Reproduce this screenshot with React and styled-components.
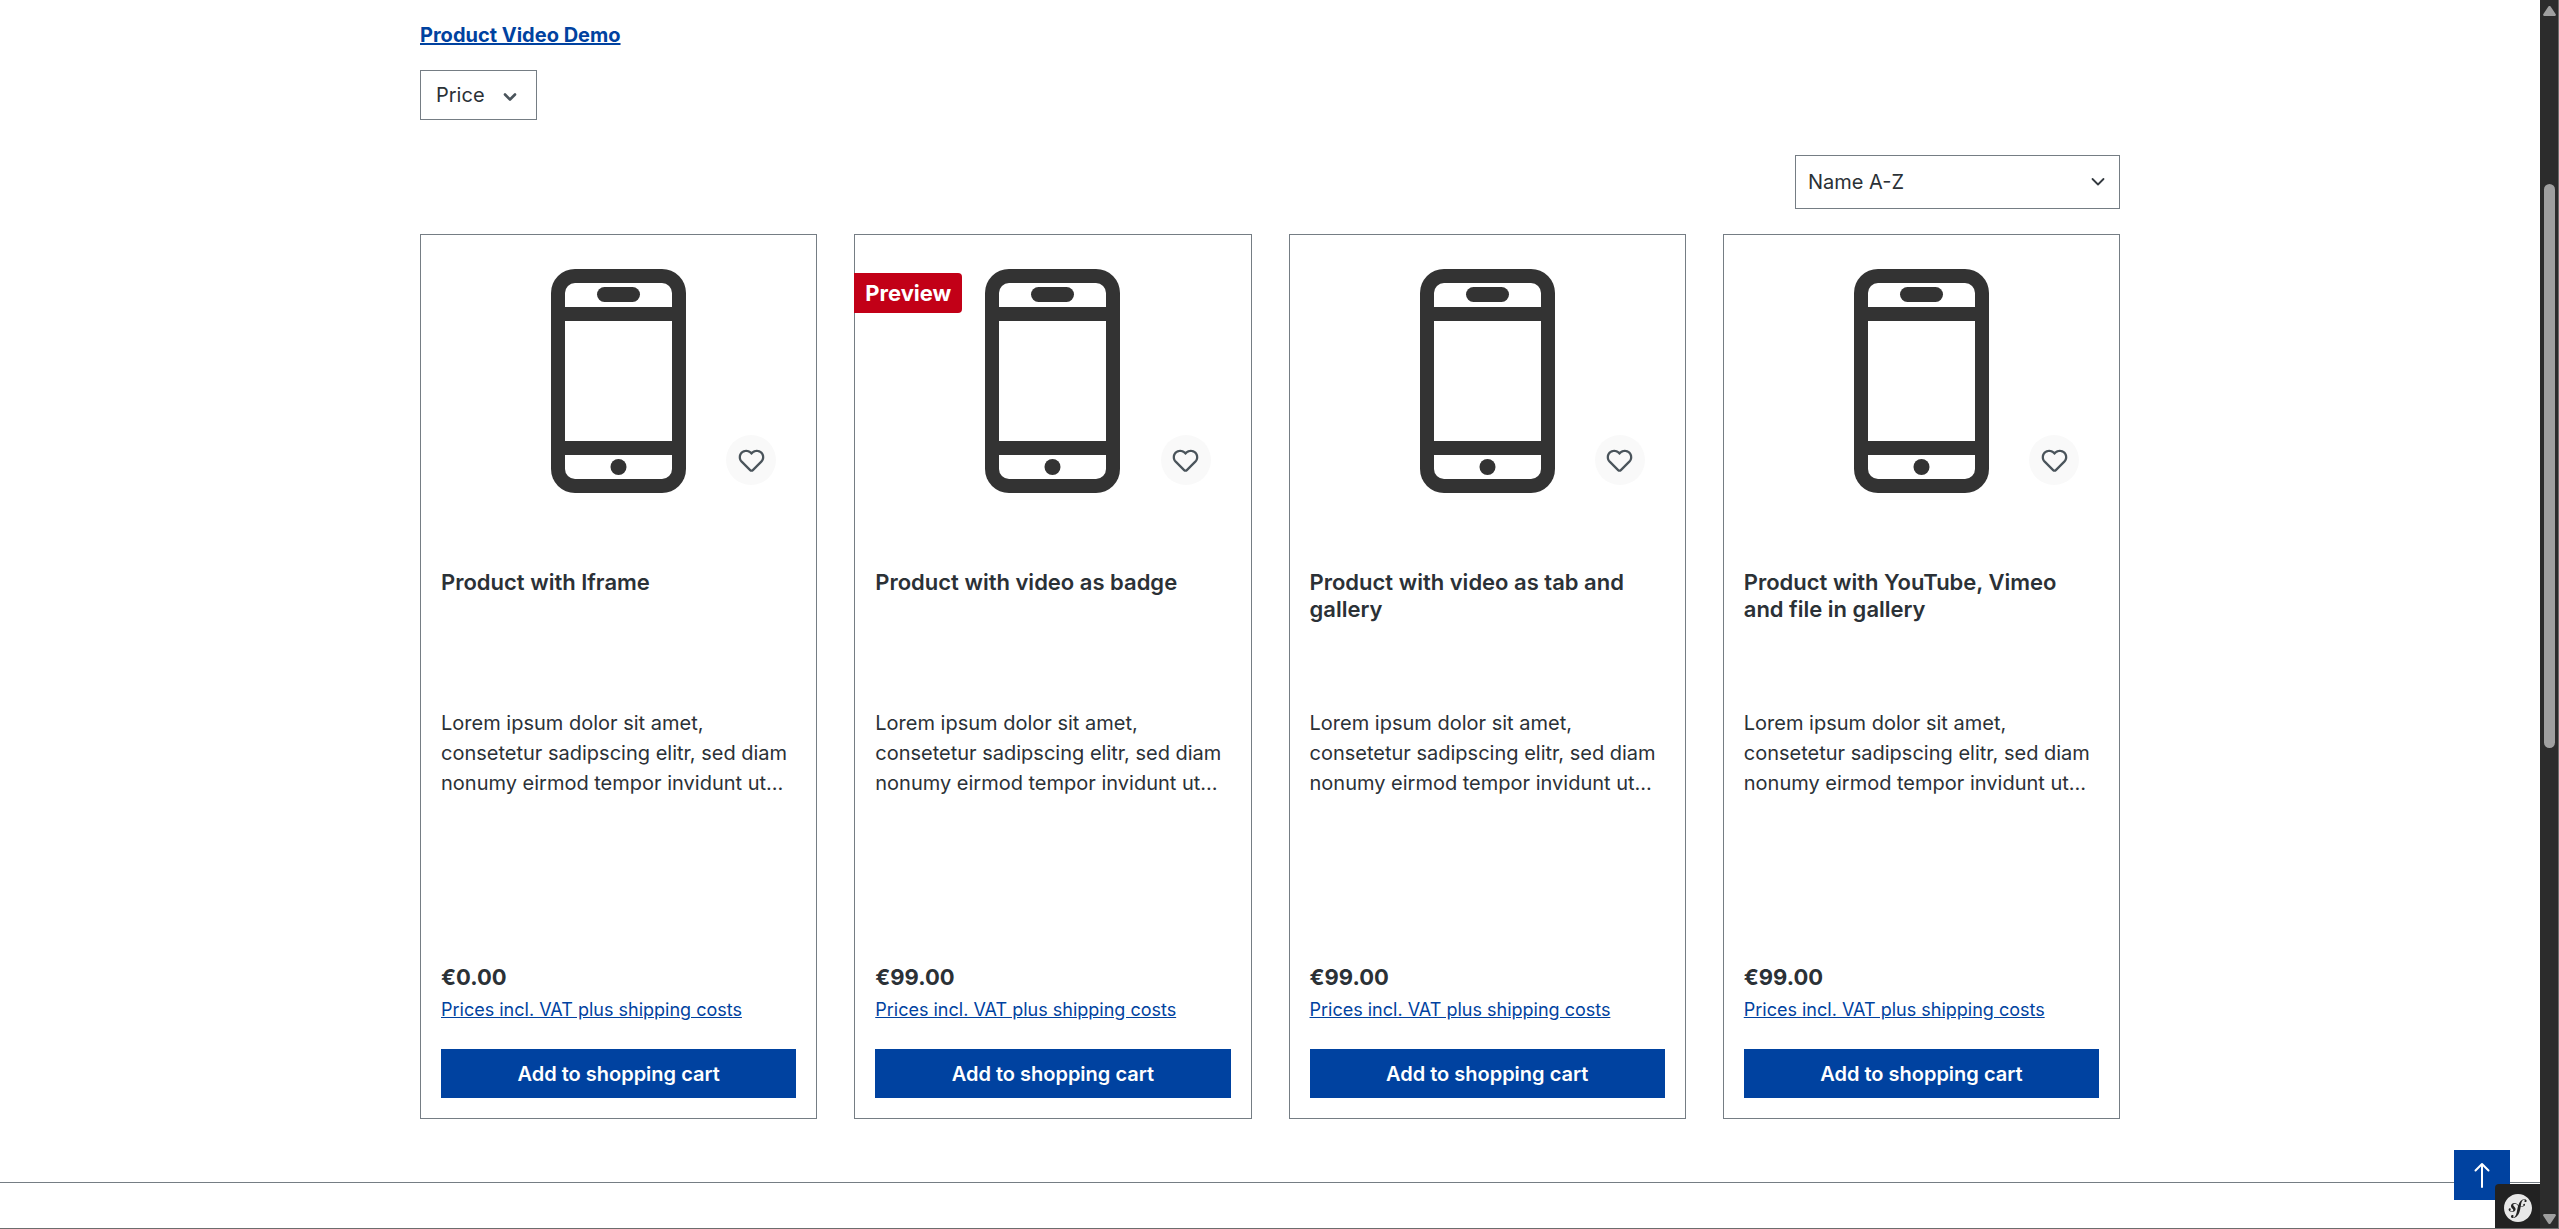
import React from "react";
import styled, { createGlobalStyle } from "styled-components";
import { SiSymfony } from "react-icons/si";

const GlobalStyle = createGlobalStyle`
  *, *::before, *::after { box-sizing: border-box; }
  body {
    margin: 0;
    background: #fff;
    color: #2b3136;
    font-family: Inter, "Liberation Sans", sans-serif;
    font-size: 20px;
    line-height: 30px;
  }
  button, select { font: inherit; color: inherit; }
`;

const Shell = styled.div`
  display: grid;
  grid-template-columns: minmax(0, 1fr) 19px;
  height: 100vh;
  overflow: hidden;
  border-bottom: 1px solid #6d6d6d;
`;

const Page = styled.div`
  display: flex;
  flex-direction: column;
`;

const Container = styled.main`
  width: 100%;
  max-width: 1740px;
  margin: 0 auto;
  padding: 20px 20px 63px;
  display: flex;
  flex-direction: column;
  align-items: flex-start;
`;

const CategoryLink = styled.a`
  color: #0042a0;
  font-weight: 700;
`;

const FilterButton = styled.button`
  display: flex;
  align-items: center;
  gap: 15px;
  height: 50px;
  margin-top: 20px;
  padding: 0 16px 0 15px;
  border: 1px solid #757d84;
  background: #fff;
`;

const Sorting = styled.label`
  display: grid;
  align-items: center;
  width: 325px;
  margin: 35px 0 25px;
  align-self: flex-end;
`;

const SortSelect = styled.select`
  grid-area: 1 / 1;
  appearance: none;
  width: 100%;
  height: 54px;
  padding: 0 48px 0 12px;
  border: 1px solid #757d84;
  border-radius: 0;
  background: #fff;
`;

const SelectArrow = styled.svg`
  grid-area: 1 / 1;
  justify-self: end;
  margin-right: 14px;
  pointer-events: none;
`;

const Listing = styled.div`
  display: grid;
  grid-template-columns: repeat(4, minmax(0, 1fr));
  gap: 37px;
  width: 100%;
`;

const Card = styled.article`
  position: relative;
  display: flex;
  flex-direction: column;
  padding: 20px;
  border: 1px solid #757d84;
`;

const Badge = styled.span`
  position: absolute;
  top: 38px;
  left: -1px;
  padding: 0 11px;
  border-radius: 0 4px 4px 0;
  background: #c20017;
  color: #fff;
  font-size: 22px;
  font-weight: 700;
  line-height: 40px;
`;

const Picture = styled.div`
  position: relative;
  display: flex;
  align-items: center;
  justify-content: center;
  height: 250px;
  padding-top: 2px;
`;

const WishlistButton = styled.button`
  position: absolute;
  right: 20px;
  bottom: 20px;
  display: flex;
  align-items: center;
  justify-content: center;
  width: 50px;
  height: 50px;
  padding: 0;
  border: 0;
  border-radius: 50%;
  background: #f9f9f9;
  color: #4a545b;
`;

const Title = styled.h2`
  height: 108px;
  margin: 64px 0 0;
  font-size: 22px;
  font-weight: 600;
  line-height: 27px;
`;

const Description = styled.p`
  height: 210px;
  margin: 31px 0 0;
`;

const Price = styled.p`
  margin: 44px 0 0;
  font-size: 22px;
  font-weight: 700;
  line-height: 30px;
`;

const TaxLink = styled.a`
  align-self: flex-start;
  margin-top: 5px;
  color: #0042a0;
  font-size: 18px;
  line-height: 26px;
`;

const BuyButton = styled.button`
  height: 49px;
  margin-top: 26px;
  border: 0;
  background: #0042a0;
  color: #fff;
  font-weight: 600;
`;

const Footer = styled.footer`
  flex: 1;
  border-top: 1px solid #757d84;
`;

const ScrollUp = styled.button`
  position: fixed;
  right: 49px;
  bottom: 29px;
  display: flex;
  align-items: center;
  justify-content: center;
  width: 56px;
  height: 50px;
  padding: 0;
  border: 0;
  background: #0042a0;
  color: #fff;
`;

const DebugToggle = styled.button`
  position: fixed;
  right: 19px;
  bottom: 1px;
  display: flex;
  align-items: center;
  justify-content: center;
  width: 45px;
  height: 44px;
  padding: 3px 0 0;
  border: 0;
  border-radius: 4px 0 0 0;
  background: #222;
  color: #e8e8e8;
`;

const Scrollbar = styled.div`
  display: flex;
  flex-direction: column;
  align-items: center;
  padding: 6px 0 4px;
  border-right: 1px solid #6d6d6d;
  background: #2c2c2c;
`;

const Track = styled.div`
  flex: 1;
  display: grid;
  grid-template-rows: 168fr 564fr 466fr;
  width: 11px;
`;

const Thumb = styled.div`
  grid-row: 2;
  border-radius: 6px;
  background: #a0a0a0;
`;

const blurb =
  "Lorem ipsum dolor sit amet, consetetur sadipscing elitr, sed diam nonumy eirmod tempor invidunt ut…";

const products = [
  { name: "Product with Iframe", price: "€0.00" },
  { name: "Product with video as badge", price: "€99.00", badge: "Preview" },
  { name: "Product with video as tab and gallery", price: "€99.00" },
  { name: "Product with YouTube, Vimeo and file in gallery", price: "€99.00" },
];

const Phone = () => (
  <svg width="135" height="224" viewBox="0 0 135 224" role="img" aria-label="Smartphone">
    <rect width="135" height="224" rx="24" fill="#333" />
    <path d="M14 38V24a10 10 0 0 1 10-10h87a10 10 0 0 1 10 10v14z" fill="#fff" />
    <rect x="46" y="18" width="43" height="15" rx="7.5" fill="#333" />
    <rect x="14" y="52" width="107" height="120" fill="#fff" />
    <path d="M14 186h107v14a10 10 0 0 1-10 10H24a10 10 0 0 1-10-10z" fill="#fff" />
    <circle cx="67.5" cy="198" r="8" fill="#333" />
  </svg>
);

const Heart = () => (
  <svg width="27" height="27" viewBox="0 0 24 24" fill="currentColor" aria-hidden="true">
    <path d="M20.0139 12.2998c1.8224-1.8224 1.8224-4.7772 0-6.5996-1.8225-1.8225-4.7772-1.8225-6.5997 0L12 7.1144l-1.4142-1.4142c-1.8225-1.8225-4.7772-1.8225-6.5997 0-1.8224 1.8224-1.8224 4.7772 0 6.5996l7.519 7.519a.7.7 0 0 0 .9899 0l7.5189-7.519zm1.4142 1.4142-7.519 7.519c-1.0543 1.0544-2.7639 1.0544-3.8183 0L2.572 13.714c-2.6035-2.6035-2.6035-6.8245 0-9.428 2.6035-2.6035 6.8246-2.6035 9.4281 0 2.6035-2.6035 6.8246-2.6035 9.428 0 2.6036 2.6035 2.6036 6.8245 0 9.428z" />
  </svg>
);

const Product = ({ name, price, badge }) => (
  <Card>
    {badge && <Badge>{badge}</Badge>}
    <Picture>
      <Phone />
      <WishlistButton type="button" aria-label={`Add ${name} to wishlist`}>
        <Heart />
      </WishlistButton>
    </Picture>
    <Title>{name}</Title>
    <Description>{blurb}</Description>
    <Price>{price}</Price>
    <TaxLink href="#shipping">Prices incl. VAT plus shipping costs</TaxLink>
    <BuyButton type="button">Add to shopping cart</BuyButton>
  </Card>
);

export default function App() {
  return (
    <>
      <GlobalStyle />
      <Shell>
        <Page>
          <Container>
            <CategoryLink href="#product-video-demo">Product Video Demo</CategoryLink>
            <FilterButton type="button" aria-expanded="false">
              Price
              <svg width="20" height="20" viewBox="0 0 20 20" fill="none" stroke="#4a545b" strokeWidth="2.6" strokeLinecap="round" strokeLinejoin="round" aria-hidden="true">
                <path d="M5 9.5l5 5 5-5" />
              </svg>
            </FilterButton>
            <Sorting>
              <SortSelect aria-label="Sorting" defaultValue="name-asc">
                <option value="name-asc">Name A-Z</option>
                <option value="name-desc">Name Z-A</option>
              </SortSelect>
              <SelectArrow width="16" height="16" viewBox="0 0 16 16" fill="none" stroke="#343a40" strokeWidth="1.8" strokeLinecap="round" strokeLinejoin="round" aria-hidden="true">
                <path d="M2.5 5l5.5 5.5 5.5-5.5" />
              </SelectArrow>
            </Sorting>
            <Listing>
              {products.map((product) => (
                <Product key={product.name} {...product} />
              ))}
            </Listing>
          </Container>
          <Footer />
        </Page>
        <Scrollbar aria-hidden="true">
          <svg width="13" height="10" viewBox="0 0 13 10" fill="#a0a0a0">
            <path d="M5.2 .8a1.6 1.6 0 0 1 2.6 0l4.8 7.2a1.2 1.2 0 0 1-1 2H1.400a1.2 1.2 0 0 1-1-2z" />
          </svg>
          <Track>
            <Thumb />
          </Track>
          <svg width="13" height="10" viewBox="0 0 13 10" fill="#a0a0a0">
            <path d="M5.2 9.2a1.6 1.6 0 0 0 2.6 0L12.6 2a1.2 1.2 0 0 0-1-2H1.400a1.2 1.2 0 0 0-1 2z" />
          </svg>
        </Scrollbar>
      </Shell>
      <ScrollUp type="button" aria-label="Back to top">
        <svg width="24" height="26" viewBox="0 0 24 26" fill="none" stroke="currentColor" strokeWidth="2" strokeLinecap="round" strokeLinejoin="round" aria-hidden="true">
          <path d="M12 25V2M5.5 8.5L12 2l6.5 6.5" />
        </svg>
      </ScrollUp>
      <DebugToggle type="button" aria-label="Symfony toolbar">
        <SiSymfony size={28} />
      </DebugToggle>
    </>
  );
}
